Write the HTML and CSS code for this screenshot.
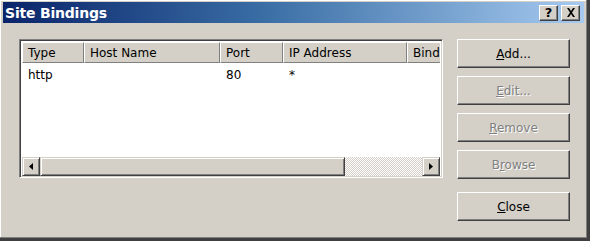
FILE: index.html
```html
<!DOCTYPE html>
<html>
<head>
<meta charset="utf-8">
<link rel="stylesheet" href="styles.css">
</head>
<body>
<div class="window">
  <div class="titlebar">
    <span class="title">Site Bindings</span>
    <div class="caption-btns">
      <span class="cap-btn">?</span>
      <span class="cap-btn close">
        <svg width="10" height="9" viewBox="0 0 10 9"><path d="M1 0h2l2 3 2-3h2L6 4.5 9 9H7L5 6 3 9H1l3-4.5z" fill="#000"/></svg>
      </span>
    </div>
  </div>
  <div class="content">
    <div class="listview">
      <div class="header">
        <div class="col c1">Type</div>
        <div class="col c2">Host Name</div>
        <div class="col c3">Port</div>
        <div class="col c4">IP Address</div>
        <div class="col c5">Bind</div>
      </div>
      <div class="rows">
        <div class="row">
          <div class="cell c1">http</div>
          <div class="cell c2"></div>
          <div class="cell c3">80</div>
          <div class="cell c4">*</div>
        </div>
      </div>
      <div class="hscroll">
        <div class="arrow"><svg width="4" height="7" viewBox="0 0 4 7"><path d="M4 0v7L0 3.5z" fill="#000"/></svg></div>
        <div class="thumb"></div>
        <div class="track"></div>
        <div class="arrow"><svg width="4" height="7" viewBox="0 0 4 7"><path d="M0 0v7l4-3.5z" fill="#000"/></svg></div>
      </div>
    </div>
    <div class="buttons">
      <div class="btn"><span><u>A</u>dd...</span></div>
      <div class="btn disabled"><span><u>E</u>dit...</span></div>
      <div class="btn disabled"><span><u>R</u>emove</span></div>
      <div class="btn disabled"><span>B<u>r</u>owse</span></div>
      <div class="btn close-btn"><span><u>C</u>lose</span></div>
    </div>
  </div>
</div>
</body>
</html>
```
FILE: styles.css
```css
* { box-sizing: border-box; }
html, body { margin: 0; padding: 0; }
body {
  width: 590px;
  height: 241px;
  background: #d4d0c8;
  font-family: "DejaVu Sans", Tahoma, sans-serif;
  font-size: 12px;
  color: #000;
  overflow: hidden;
}
.window {
  width: 590px;
  height: 241px;
  background: #d4d0c8;
  padding: 2px 3px 3px 3px;
  border-right: 3px solid #404040;
  border-bottom: 3px solid #404040;
  box-shadow: inset -1px -1px 0 #808080, inset 1px 1px 0 #ffffff;
  display: flex;
  flex-direction: column;
}
.titlebar {
  height: 21px;
  background: linear-gradient(to right, #0a246a 0%, #3a6ea5 45%, #a6caf0 100%);
  display: flex;
  align-items: center;
  justify-content: space-between;
  padding: 0 3px 0 2px;
}
.title {
  color: #fff;
  font-weight: bold;
  font-size: 14px;
  letter-spacing: -0.2px;
}
.caption-btns {
  display: flex;
  gap: 3px;
  margin-right: 1px;
}
.cap-btn {
  width: 19px;
  height: 16px;
  background: #d4d0c8;
  border-top: 1px solid #fff;
  border-left: 1px solid #fff;
  border-right: 1px solid #404040;
  border-bottom: 1px solid #404040;
  box-shadow: inset -1px -1px 0 #808080;
  display: flex;
  align-items: center;
  justify-content: center;
  font-weight: bold;
  font-size: 13px;
  line-height: 1;
}
.content {
  display: flex;
  padding: 16px 0 0 16px;
}
.listview {
  width: 424px;
  height: 139px;
  background: #fff;
  border-top: 1px solid #808080;
  border-left: 1px solid #808080;
  border-right: 1px solid #fff;
  border-bottom: 1px solid #fff;
  box-shadow: inset 1px 1px 0 #404040, inset -1px -1px 0 #d4d0c8;
  padding: 2px;
  display: flex;
  flex-direction: column;
  overflow: hidden;
}
.header {
  display: flex;
  height: 21px;
  flex: none;
  overflow: hidden;
}
.col {
  flex: none;
  background: #d4d0c8;
  border-top: 1px solid #fff;
  border-left: 1px solid #fff;
  border-right: 1px solid #808080;
  border-bottom: 1px solid #808080;
  box-shadow: 1px 0 0 #404040;
  padding: 3px 0 0 5px;
  white-space: nowrap;
  overflow: hidden;
  font-size: 12px;
  color: #000;
}
.c1 { width: 62px; }
.c2 { width: 136px; }
.c3 { width: 63px; }
.c4 { width: 124px; }
.c5 { width: 40px; }
.rows {
  flex: 1;
}
.row {
  display: flex;
  height: 20px;
  padding-top: 3px;
  align-items: center;
}
.cell {
  flex: none;
  padding-left: 6px;
  white-space: nowrap;
}
.hscroll {
  height: 19px;
  display: flex;
  flex: none;
  margin-bottom: -1px;
}
.arrow {
  width: 18px;
  flex: none;
  background: #d4d0c8;
  border-top: 1px solid #d4d0c8;
  border-left: 1px solid #d4d0c8;
  border-right: 1px solid #404040;
  border-bottom: 1px solid #404040;
  box-shadow: inset 1px 1px 0 #fff, inset -1px -1px 0 #808080;
  display: flex;
  align-items: center;
  justify-content: center;
}
.thumb {
  width: 305px;
  flex: none;
  background: #d4d0c8;
  border-top: 1px solid #d4d0c8;
  border-left: 1px solid #d4d0c8;
  border-right: 1px solid #404040;
  border-bottom: 1px solid #404040;
  box-shadow: inset 1px 1px 0 #fff, inset -1px -1px 0 #808080;
}
.track {
  flex: 1;
  background-color: #fff;
  background-image:
    linear-gradient(45deg, #d4d0c8 25%, transparent 25%, transparent 75%, #d4d0c8 75%),
    linear-gradient(45deg, #d4d0c8 25%, transparent 25%, transparent 75%, #d4d0c8 75%);
  background-size: 2px 2px;
  background-position: 0 0, 1px 1px;
}
.buttons {
  display: flex;
  flex-direction: column;
  gap: 8px;
  margin-left: 14px;
  margin-top: 0;
}
.btn {
  width: 113px;
  height: 29px;
  background: #d4d0c8;
  border-top: 1px solid #fff;
  border-left: 1px solid #fff;
  border-right: 1px solid #404040;
  border-bottom: 1px solid #404040;
  box-shadow: inset -1px -1px 0 #808080;
  display: flex;
  align-items: center;
  justify-content: center;
  font-size: 12px;
}
.btn u { text-underline-offset: 1px; }
.btn.disabled {
  color: #808080;
  text-shadow: 1px 1px 0 #fff;
}
.btn.close-btn {
  margin-top: 5px;
}
```
